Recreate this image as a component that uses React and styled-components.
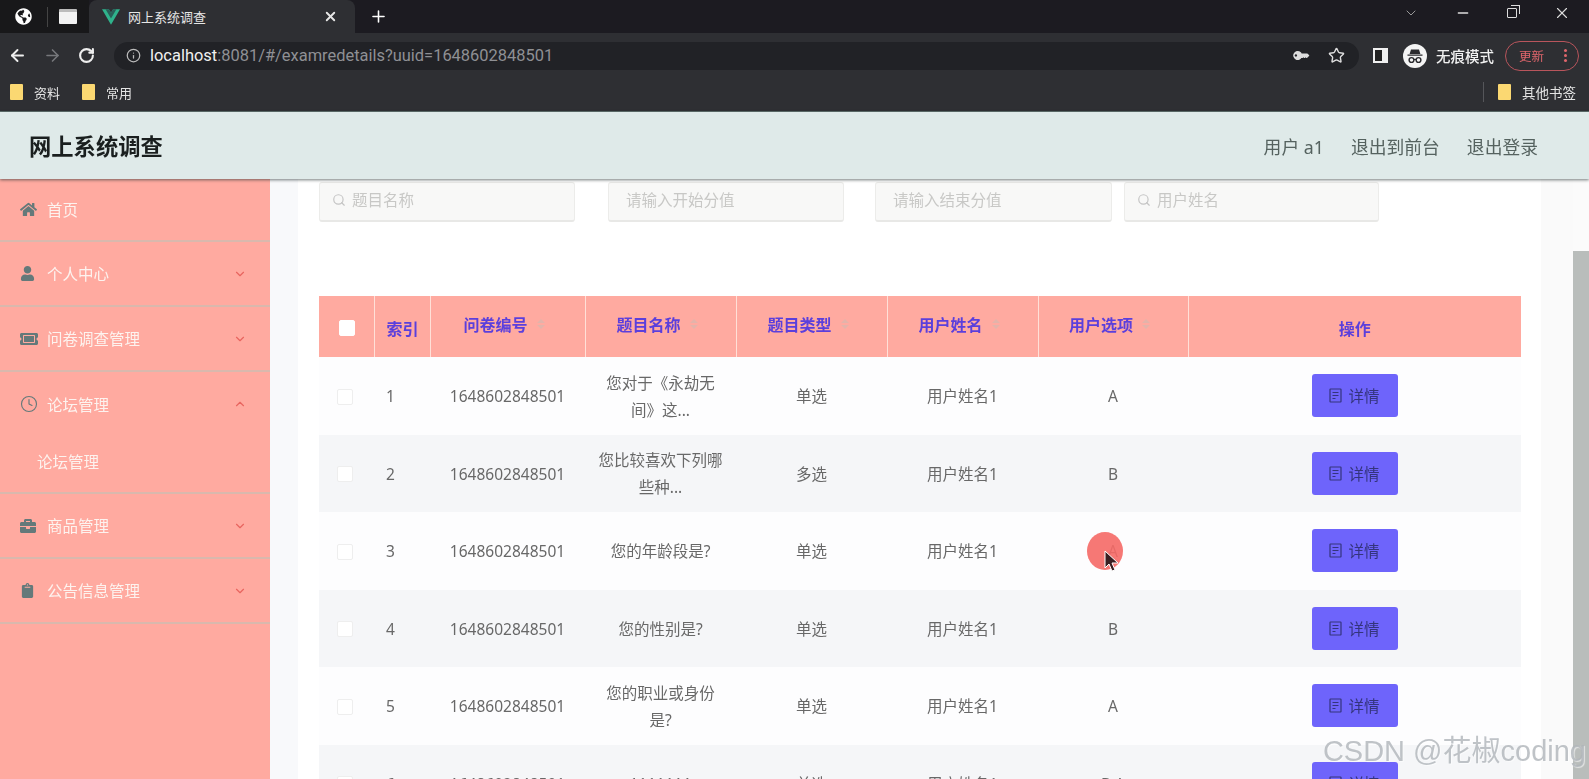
import React from 'react'
import styled, { createGlobalStyle } from 'styled-components'
import { Search, ChevronDown, ChevronUp, Star, Minus, X, Plus, ArrowLeft, ArrowRight, RotateCw, Info, Clock } from 'lucide-react'
import { FaGlobeAmericas, FaHome, FaUser, FaTicketAlt, FaBriefcase, FaClipboard, FaKey } from 'react-icons/fa'

const GlobalStyle = createGlobalStyle`
    html, body {
        margin: 0;
        padding: 0;
        height: 100%;
        overflow: hidden;
        background: #fff;
    }
    * { box-sizing: border-box; }
`

const FONT = `"Noto Sans", "Noto Sans CJK SC", sans-serif`

const Page = styled.div`
    position: relative;
    width: 1589px;
    height: 779px;
    overflow: hidden;
    display: flex;
    flex-direction: column;
    font-family: ${FONT};
    filter: blur(0.5px);
`

/* browser chrome */
const TabStrip = styled.div`
    height: 33px;
    background: #1c1b21;
    display: flex;
    align-items: stretch;
    color: #fff;
`
const PinnedTabs = styled.div`
    width: 89px;
    display: flex;
    align-items: center;
    padding-left: 15px;
    background: #18181a;
`
const TabDivider = styled.span`
    width: 1px;
    height: 20px;
    background: #444;
    margin: 0 11px 0 15px;
`
const TabSquare = styled.span`
    width: 18px;
    height: 15px;
    border-radius: 1px;
    background: linear-gradient(#bbb 0 3px, #f2f2f2 3px);
`
const ActiveTab = styled.div`
    width: 266px;
    background: #2e2f33;
    border-radius: 8px 8px 0 0;
    display: flex;
    align-items: center;
    padding: 0 17px 0 13px;
    font-size: 13px;
    color: #e6e6e6;
`
const TabTitle = styled.span`
    margin-left: 8px;
    flex: 1;
`
const NewTab = styled.div`
    display: flex;
    align-items: center;
    margin-left: 14px;
    flex: 1;
`
const WindowControls = styled.div`
    display: flex;
    align-items: center;
    gap: 36px;
    padding: 0 18px 7px 0;
    color: #ddd;
`
const RestoreIcon = styled.span`
    position: relative;
    width: 10px;
    height: 10px;
    border: 1.5px solid #ddd;
    border-radius: 1px;
    &::after {
        content: '';
        position: absolute;
        top: -4px;
        right: -4px;
        width: 8px;
        height: 8px;
        border: 1.5px solid #ddd;
        border-left: 0;
        border-bottom: 0;
    }
`

const Toolbar = styled.div`
    height: 40px;
    background: #2e2f33;
    display: flex;
    align-items: center;
    padding: 5px 4px 0 8px;
    color: #e8e8e8;
`
const NavButton = styled.span`
    width: 35px;
    display: flex;
    align-items: center;
    color: ${p => p.$dim ? '#77787c' : '#eee'};
`
const AddressBar = styled.div`
    width: 1245px;
    height: 28px;
    margin-left: 1px;
    border-radius: 14px;
    background: #212226;
    display: flex;
    align-items: center;
    padding: 0 14px 0 12px;
    font-family: Roboto, ${FONT};
    font-size: 16.45px;
    color: #8f9094;
`
const Host = styled.span`
    margin-left: 9px;
    color: #f0f0f0;
`
const AddressRest = styled.span`
    flex: 1;
`
const AddressIcons = styled.div`
    display: flex;
    align-items: center;
    gap: 21px;
    color: #ddd;
`
const PanelIcon = styled.span`
    width: 15px;
    height: 15px;
    margin-left: 14px;
    border: 2px solid #f0f0f0;
    border-right-width: 6px;
    background: #222;
`
const Incognito = styled.div`
    margin-left: 15px;
    display: flex;
    align-items: center;
    gap: 9px;
    font-size: 14.5px;
    color: #f0f0f0;
    font-weight: 500;
`
const UpdatePill = styled.div`
    margin-left: 11px;
    width: 74px;
    height: 30px;
    border: 1px solid #b9555c;
    border-radius: 15px;
    display: flex;
    align-items: center;
    justify-content: space-between;
    padding: 0 11px 0 13px;
    font-size: 12.5px;
    color: #e0666c;
`
const Dots = styled.span`
    width: 3px;
    height: 3px;
    border-radius: 50%;
    background: #e0666c;
    box-shadow: 0 -5px 0 #e0666c, 0 5px 0 #e0666c;
`

const Bookmarks = styled.div`
    height: 39px;
    background: #2e2f33;
    border-bottom: 1px solid #5f6f6c;
    display: flex;
    align-items: center;
    padding-left: 10px;
    font-size: 13px;
    color: #e4e4e4;
`
const Folder = styled.span`
    width: 13px;
    height: 16px;
    background: #fbd872;
    border-radius: 1px;
    margin-right: 11px;
`
const BookmarkLabel = styled.span`
    margin-right: ${p => p.$mr || 22}px;
    font-size: ${p => p.$size || 13}px;
`
const BookmarkSpacer = styled.span`
    flex: 1;
`
const BookmarkDivider = styled.span`
    width: 1px;
    height: 20px;
    background: #55565a;
    margin-right: 14px;
`

/* app header */
const TopBar = styled.header`
    position: relative;
    z-index: 2;
    height: 67px;
    background: #dfeae9;
    box-shadow: 0 1px 3px rgba(40, 50, 50, .65);
    display: flex;
    align-items: center;
    padding: 0 51px 0 29px;
`
const Brand = styled.div`
    flex: 1;
    font-size: 22.3px;
    font-weight: 700;
    color: #1a1f1f;
`
const TopLink = styled.span`
    margin-left: 27px;
    font-size: 17.8px;
    color: #55625f;
`

/* page body */
const Body = styled.div`
    flex: 1;
    min-height: 0;
    display: flex;
`
const Sidebar = styled.aside`
    width: 270px;
    flex: none;
    background: #ffaaa0;
`
const MenuItem = styled.div`
    height: ${p => p.$h || 65}px;
    display: flex;
    align-items: center;
    padding: 0 23px 0 20px;
    border-bottom: ${p => p.$open ? 0 : '2px solid #d9b8ad'};
    font-size: 15.5px;
    color: #fdf3ef;
`
const MenuIcon = styled.span`
    width: 27px;
    flex: none;
    display: flex;
    align-items: center;
    color: #64797a;
`
const MenuLabel = styled.span`
    flex: 1;
`
const SubItem = styled.div`
    height: 58px;
    padding: 0 0 6px 37px;
    display: flex;
    align-items: center;
    border-bottom: 2px solid #d9b8ad;
    font-size: 15.5px;
    color: #fdf3ef;
`
const Chevron = styled.span`
    display: flex;
    color: #e8655f;
`

const Main = styled.main`
    flex: 1;
    min-width: 0;
    background: #f8f9fb;
    display: flex;
    padding-left: 28px;
`
const Card = styled.div`
    width: 1243px;
    background: #fff;
    padding: 3px 20px 0 21px;
    overflow: hidden;
`
const RightGutter = styled.div`
    flex: 1;
    background: #fafafa;
`
const Scrollbar = styled.div`
    width: 16px;
    flex: none;
    background: linear-gradient(#fbfbfb 72px, #b9bdbb 72px);
`

const Filters = styled.div`
    display: flex;
    height: 40px;
    margin-bottom: 74px;
`
const Field = styled.label`
    width: ${p => p.$w}px;
    margin-right: ${p => p.$mr || 0}px;
    display: flex;
    align-items: center;
    gap: 6px;
    padding: 0 12px 4px;
    background: #f8f8f7;
    border: 1px solid #ececea;
    border-bottom: 2px solid #e8e8e6;
    border-radius: 3px;
    color: #c4c4c4;
`
const FieldInput = styled.input`
    flex: 1;
    min-width: 0;
    border: 0;
    outline: 0;
    padding: 0 0 0 ${p => p.$pl || 0}px;
    background: transparent;
    font-family: ${FONT};
    font-size: 15.5px;
    &::placeholder { color: #c8c8c6; }
`

const Table = styled.table`
    width: 1202px;
    table-layout: fixed;
    border-collapse: collapse;
`
const Th = styled.th`
    height: 61px;
    padding: ${p => p.$left ? '2px 0 0 12px' : p.$plain ? '2px 0 0' : '0 0 5px'};
    background: #ffaaa0;
    border-left: ${p => p.$first ? 0 : '1px solid #ffe0d8'};
    text-align: ${p => p.$left ? 'left' : 'center'};
    font-size: 16px;
    font-weight: 700;
    color: #5b3fdc;
`
const SortWrap = styled.span`
    display: inline-flex;
    align-items: center;
    gap: 9px;
    padding-right: 7px;
`
const Carets = styled.span`
    display: inline-flex;
    flex-direction: column;
    gap: 2px;
    &::before, &::after {
        content: '';
        border: 4px solid transparent;
    }
    &::before { border-top: 0; border-bottom-color: #e3b3aa; }
    &::after { border-bottom: 0; border-top-color: #e3b3aa; }
`
const Tr = styled.tr`
    background: ${p => p.$even ? '#f5f6f8' : '#fdfdfe'};
`
const Td = styled.td`
    height: 77.5px;
    padding: ${p => p.$left ? '2px 0 0 12px' : '2px 13px 0'};
    text-align: ${p => p.$left ? 'left' : 'center'};
    font-size: 15.5px;
    line-height: 27px;
    color: #686868;
`
const Check = styled.span`
    display: block;
    width: 16px;
    height: 16px;
    margin-left: ${p => p.$head ? 20 : 18}px;
    border: 1px solid ${p => p.$head ? '#fff' : '#eeeeee'};
    border-radius: 2px;
    background: #fff;
`
const DetailButton = styled.button`
    width: 86px;
    height: 43px;
    margin-bottom: 2px;
    border: 0;
    border-radius: 3px;
    background: #6e64fb;
    color: #34347c;
    font-family: ${FONT};
    font-size: 15.5px;
    display: inline-flex;
    align-items: center;
    justify-content: center;
    gap: 6px;
`

/* screen recording overlays */
const ClickMark = styled.div`
    position: absolute;
    left: 1087px;
    top: 532px;
    width: 36px;
    height: 38px;
    border-radius: 50%;
    background: rgba(245, 105, 102, .9);
`
const Pointer = styled.svg`
    position: absolute;
    left: 1104px;
    top: 550px;
`
const Watermark = styled.div`
    position: absolute;
    right: 3px;
    bottom: 10px;
    font-family: "Liberation Sans", "Noto Sans CJK SC", sans-serif;
    font-size: 29px;
    color: rgba(175, 180, 185, .8);
    text-shadow: 1px 1px 1px rgba(255, 255, 255, .6);
    white-space: nowrap;
`

const VueLogo = () => (
    <svg width="18" height="16" viewBox="0 0 256 221">
        <path fill="#2fb38c" d="M204.8 0H256L128 220.8 0 0h97.92L128 51.2 157.44 0z" />
        <path fill="#2a5f58" d="M50.56 0 128 133.12 204.8 0h-47.36L128 51.2 97.92 0z" />
    </svg>
)

const IncognitoBadge = () => (
    <svg width="24" height="24" viewBox="0 0 24 24">
        <circle cx="12" cy="12" r="12" fill="#f4f4f4" />
        <path fill="#2a2a2e" d="M8 5.5h8l1.4 4.5H6.600zM4.500 10.500h15v1.300h-15z" />
        <circle cx="8.500" cy="16" r="2.400" fill="none" stroke="#2a2a2e" strokeWidth="1.400" />
        <circle cx="15.500" cy="16" r="2.400" fill="none" stroke="#2a2a2e" strokeWidth="1.400" />
        <path stroke="#2a2a2e" strokeWidth="1.200" d="M10.900 15.500h2.200" />
    </svg>
)

const TicketsIcon = () => (
    <svg width="13" height="15" viewBox="0 0 13 15" fill="none" stroke="currentColor" strokeWidth="1.200">
        <rect x="1" y="1" width="11" height="13" rx="0.500" />
        <path d="M3.500 4.500h6M3.500 7.500h6M3.500 10.500h3" />
    </svg>
)

const menu = [
    { label: '个人中心', icon: <FaUser size={15} /> },
    { label: '问卷调查管理', icon: <FaTicketAlt size={18} /> },
]
const menuAfter = [
    { label: '商品管理', icon: <FaBriefcase size={16} /> },
    { label: '公告信息管理', icon: <FaClipboard size={15} /> },
]

const columns = ['问卷编号', '题目名称', '题目类型', '用户姓名', '用户选项']

const rows = [
    ['1', '您对于《永劫无间》这...', '单选', 'A'],
    ['2', '您比较喜欢下列哪些种...', '多选', 'B'],
    ['3', '您的年龄段是?', '单选', 'A'],
    ['4', '您的性别是?', '单选', 'B'],
    ['5', '您的职业或身份是?', '单选', 'A'],
    ['6', '1111111', '单选', 'B,A'],
]

const App = () => {
    return (
        <Page>
            <GlobalStyle />
            <TabStrip>
                <PinnedTabs>
                    <FaGlobeAmericas size={17} />
                    <TabDivider />
                    <TabSquare />
                </PinnedTabs>
                <ActiveTab>
                    <VueLogo />
                    <TabTitle>网上系统调查</TabTitle>
                    <X size={15} strokeWidth={3} />
                </ActiveTab>
                <NewTab><Plus size={19} strokeWidth={2} /></NewTab>
                <WindowControls>
                    <ChevronDown size={16} strokeWidth={1.500} color="#999" />
                    <Minus size={16} />
                    <RestoreIcon />
                    <X size={18} strokeWidth={1.500} />
                </WindowControls>
            </TabStrip>
            <Toolbar>
                <NavButton><ArrowLeft size={19} strokeWidth={2.400} /></NavButton>
                <NavButton $dim><ArrowRight size={19} strokeWidth={2} /></NavButton>
                <NavButton><RotateCw size={17} strokeWidth={3} /></NavButton>
                <AddressBar>
                    <Info size={15} color="#bbb" />
                    <Host>localhost</Host>
                    <AddressRest>:8081/#/examredetails?uuid=1648602848501</AddressRest>
                    <AddressIcons>
                        <FaKey size={13} style={{ transform: 'rotate(-45deg) scaleX(-1)' }} />
                        <Star size={17} strokeWidth={2} />
                    </AddressIcons>
                </AddressBar>
                <PanelIcon />
                <Incognito><IncognitoBadge />无痕模式</Incognito>
                <UpdatePill>更新<Dots /></UpdatePill>
            </Toolbar>
            <Bookmarks>
                <Folder />
                <BookmarkLabel>资料</BookmarkLabel>
                <Folder />
                <BookmarkLabel>常用</BookmarkLabel>
                <BookmarkSpacer />
                <BookmarkDivider />
                <Folder />
                <BookmarkLabel $mr={13} $size={13.5}>其他书签</BookmarkLabel>
            </Bookmarks>

            <TopBar>
                <Brand>网上系统调查</Brand>
                <TopLink>用户 a1</TopLink>
                <TopLink>退出到前台</TopLink>
                <TopLink>退出登录</TopLink>
            </TopBar>

            <Body>
                <Sidebar>
                    <MenuItem $h={63}>
                        <MenuIcon><FaHome size={17} /></MenuIcon>
                        <MenuLabel>首页</MenuLabel>
                    </MenuItem>
                    {menu.map(item => (
                        <MenuItem key={item.label}>
                            <MenuIcon>{item.icon}</MenuIcon>
                            <MenuLabel>{item.label}</MenuLabel>
                            <Chevron><ChevronDown size={14} /></Chevron>
                        </MenuItem>
                    ))}
                    <MenuItem $open $h={64}>
                        <MenuIcon><Clock size={18} strokeWidth={1.500} /></MenuIcon>
                        <MenuLabel>论坛管理</MenuLabel>
                        <Chevron><ChevronUp size={14} /></Chevron>
                    </MenuItem>
                    <SubItem>论坛管理</SubItem>
                    {menuAfter.map(item => (
                        <MenuItem key={item.label}>
                            <MenuIcon>{item.icon}</MenuIcon>
                            <MenuLabel>{item.label}</MenuLabel>
                            <Chevron><ChevronDown size={14} /></Chevron>
                        </MenuItem>
                    ))}
                </Sidebar>
                <Main>
                    <Card>
                        <Filters>
                            <Field $w={256} $mr={33}>
                                <Search size={14} />
                                <FieldInput placeholder="题目名称" />
                            </Field>
                            <Field $w={236} $mr={31}>
                                <FieldInput $pl={5} placeholder="请输入开始分值" />
                            </Field>
                            <Field $w={237} $mr={12}>
                                <FieldInput $pl={5} placeholder="请输入结束分值" />
                            </Field>
                            <Field $w={255}>
                                <Search size={14} />
                                <FieldInput placeholder="用户姓名" />
                            </Field>
                        </Filters>
                        <Table>
                            <colgroup>
                                <col width="55" />
                                <col width="56" />
                                <col width="155" />
                                <col width="151" />
                                <col width="151" />
                                <col width="151" />
                                <col width="150" />
                                <col />
                            </colgroup>
                            <thead>
                                <tr>
                                    <Th $first $left style={{ paddingLeft: 0 }}><Check $head /></Th>
                                    <Th $left>索引</Th>
                                    {columns.map(c => (
                                        <Th key={c}><SortWrap>{c}<Carets /></SortWrap></Th>
                                    ))}
                                    <Th $plain>操作</Th>
                                </tr>
                            </thead>
                            <tbody>
                                {rows.map((r, i) => (
                                    <Tr key={r[0]} $even={i % 2 === 1}>
                                        <Td $left style={{ paddingLeft: 0 }}><Check /></Td>
                                        <Td $left>{r[0]}</Td>
                                        <Td>1648602848501</Td>
                                        <Td>{r[1]}</Td>
                                        <Td>{r[2]}</Td>
                                        <Td>用户姓名1</Td>
                                        <Td>{r[3]}</Td>
                                        <Td><DetailButton><TicketsIcon />详情</DetailButton></Td>
                                    </Tr>
                                ))}
                            </tbody>
                        </Table>
                    </Card>
                    <RightGutter />
                    <Scrollbar />
                </Main>
            </Body>

            <ClickMark />
            <Pointer width="16" height="24" viewBox="0 0 16 24">
                <path d="M1 1v17l4-4 3 7 3-1-3-7h6z" fill="#3a1f22" stroke="#fff" strokeWidth="1" />
            </Pointer>
            <Watermark>CSDN @花椒coding</Watermark>
        </Page>
    )
}

export default App
